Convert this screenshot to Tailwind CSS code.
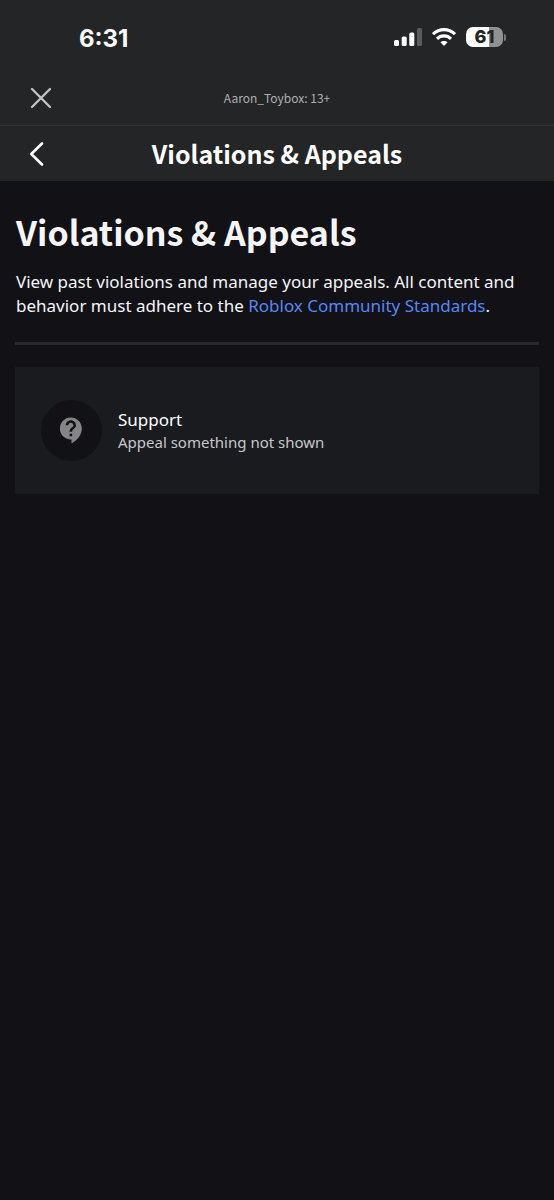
<!DOCTYPE html>
<html lang="en">
<head>
<meta charset="utf-8">
<meta name="viewport" content="width=device-width, initial-scale=1">
<title>Violations &amp; Appeals</title>
<script src="https://cdn.jsdelivr.net/npm/@tailwindcss/browser@4"></script>
</head>
<body class="min-h-screen bg-[#121116] font-['Noto_Sans',sans-serif] text-[#f5f5f8]">
<header class="bg-[#242527]">
  <div class="flex h-[70px] items-center justify-between pt-1 pr-12 pl-[79px] text-white">
    <time class="pt-1 font-['Inter',sans-serif] text-2xl font-bold">6:31</time>
    <div class="flex items-center gap-2.5">
      <svg class="h-[18px] w-7" viewBox="0 0 28 18" fill="currentColor" role="img" aria-label="Signal">
        <rect y="12" width="5" height="6" rx="1.5"/><rect x="7.7" y="8.5" width="5" height="9.5" rx="1.5"/><rect x="15.3" y="4.5" width="5" height="13.5" rx="1.5"/><rect x="23" width="5" height="18" rx="1.5" opacity=".25"/>
      </svg>
      <svg class="h-[18px] w-6" viewBox="0 0 24 18" fill="none" stroke="currentColor" stroke-width="3.2" role="img" aria-label="Wi-Fi">
        <path d="M1 6.2C7.3.1 16.7.1 23 6.2M5 10.8c4-3.9 10-3.9 14 0"/>
        <path d="M12 18l-3.6-3.7c2-1.8 5.2-1.8 7.2 0z" fill="currentColor" stroke="none"/>
      </svg>
      <div class="flex items-center gap-px" role="img" aria-label="Battery 61 percent">
        <span class="flex h-5 w-[37px] items-center justify-center rounded-[7px] bg-linear-to-r from-white from-61% to-[#919193] to-61% font-['Inter',sans-serif] text-lg leading-5 font-extrabold text-[#242527]">61</span>
        <span class="h-[7px] w-[2px] rounded-r-full bg-[#77787a]"></span>
      </div>
    </div>
  </div>
  <div class="grid h-[56px] grid-cols-[82px_1fr_82px] items-center border-b border-[#303134]">
    <button type="button" aria-label="Close" class="ml-[30px] size-[22px] text-[#c1c1c3]">
      <svg class="size-[22px]" viewBox="0 0 22 22" fill="none" stroke="currentColor" stroke-width="2.4" stroke-linecap="round"><path d="M2 2l18 18M20 2L2 20"/></svg>
    </button>
    <p class="text-center font-['Noto_Sans_CJK_SC',sans-serif] text-xs text-[#aeafb1]">Aaron_Toybox: 13+</p>
  </div>
  <div class="grid h-[55px] grid-cols-[82px_1fr_82px] items-center">
    <button type="button" aria-label="Back" class="ml-[29px] h-6 w-4 text-white">
      <svg class="h-6 w-4" viewBox="0 0 16 24" fill="none" stroke="currentColor" stroke-width="2.6" stroke-linecap="round" stroke-linejoin="round"><path d="M13 1.5L2.3 12 13 22.5"/></svg>
    </button>
    <p class="pb-0.5 text-center font-['Noto_Sans_CJK_SC',sans-serif] text-[25px] leading-8 font-bold whitespace-nowrap text-white">Violations &amp; Appeals</p>
  </div>
</header>
<main class="px-[15px] pt-[31px]">
  <h1 class="px-px font-['Noto_Sans_CJK_SC',sans-serif] text-[34px] leading-[40px] font-bold">Violations &amp; Appeals</h1>
  <p class="mt-[18px] px-px text-[17px] leading-6">View past violations and manage your appeals. All content and behavior must adhere to the <a href="#" class="text-[#5687f5]">Roblox Community Standards</a>.</p>
  <hr class="mt-6 border-t-[3px] border-[#29292e]">
  <a href="#" class="mt-[22px] flex h-[127px] items-center gap-4 bg-[#1a1b1f] px-[26px]">
    <span class="flex size-[61px] shrink-0 items-center justify-center rounded-full bg-[#121116]">
      <svg class="size-[31px] text-[#858587]" viewBox="0 0 24 24" fill="currentColor" aria-hidden="true"><path d="M11.5 2C6.81 2 3 5.81 3 10.5S6.81 19 11.5 19h.5v3c4.86-2.34 8-7 8-11.5C20 5.81 16.19 2 11.5 2zm1 14.5h-2v-2h2v2zm0-3.5h-2c0-3.25 3-3 3-5 0-1.1-.9-2-2-2s-2 .9-2 2h-2c0-2.21 1.79-4 4-4s4 1.79 4 4c0 2.5-3 2.75-3 5z"/></svg>
    </span>
    <span class="flex flex-col pb-0.5">
      <span class="text-[17px] leading-6 text-white">Support</span>
      <span class="text-[15px] leading-5 text-[#c8c8cb]">Appeal something not shown</span>
    </span>
  </a>
</main>
</body>
</html>
